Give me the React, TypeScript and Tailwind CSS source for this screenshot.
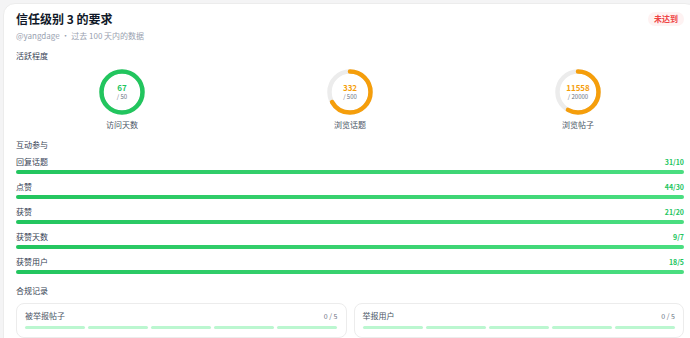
import React from 'react';

// 活跃程度的环形指标
const rings = [
  { label: '访问天数', value: 67, goal: 50, color: '#22c55e' },
  { label: '浏览话题', value: 332, goal: 500, color: '#f59e0b' },
  { label: '浏览帖子', value: 11558, goal: 20000, color: '#f59e0b' },
];

// 互动参与的进度条
const bars = [
  { label: '回复话题', value: 31, goal: 10 },
  { label: '点赞', value: 44, goal: 30 },
  { label: '获赞', value: 21, goal: 20 },
  { label: '获赞天数', value: 9, goal: 7 },
  { label: '获赞用户', value: 18, goal: 5 },
];

const records = [
  { label: '被举报帖子', value: 0, goal: 5 },
  { label: '举报用户', value: 0, goal: 5 },
];

function Ring({ value, goal, color }: { value: number; goal: number; color: string }) {
  const r = 20.5;
  const c = 2 * Math.PI * r;
  const pct = Math.min(value / goal, 1);
  return (
    <div className="relative w-[46px] h-[46px]">
      <svg width="46" height="46" viewBox="0 0 46 46" className="-rotate-90">
        <circle cx="23" cy="23" r={r} fill="none" stroke="#ececec" strokeWidth="4.5" />
        <circle
          cx="23"
          cy="23"
          r={r}
          fill="none"
          stroke={color}
          strokeWidth="4.5"
          strokeLinecap="round"
          strokeDasharray={`${c * pct} ${c}`}
        />
      </svg>
      <div className="absolute inset-0 flex flex-col items-center justify-center leading-none">
        <span className="text-[8px] font-bold" style={{ color }}>
          {value}
        </span>
        <span className="text-[6px] text-gray-500 mt-[2px]">/ {goal}</span>
      </div>
    </div>
  );
}

export default function App() {
  return (
    <div
      className="w-[690px] h-[338px] overflow-hidden bg-[#f4f4f5] pl-[3px] pt-[3px]"
      style={{ fontFamily: '"Noto Sans CJK SC", "Noto Sans", sans-serif' }}
    >
      <div className="w-[694px] h-[360px] bg-white rounded-xl border border-[#ececec] px-[12px] pt-[7px]">
        {/* 标题 */}
        <div className="flex items-center justify-between h-[16px]">
          <h1 className="text-[12px] font-bold text-gray-900 leading-[16px]">信任级别 3 的要求</h1>
          <span className="rounded-full bg-[#fef2f2] text-[#ef4444] text-[8px] font-bold px-[6px] py-[2px] leading-[10px]">
            未达到
          </span>
        </div>
        <p className="text-[8px] text-gray-400 mt-[3px] leading-[12px]">@yangdage · 过去 100 天内的数据</p>

        {/* 活跃程度 */}
        <p className="text-[8px] text-gray-700 mt-[8px] leading-[12px]">活跃程度</p>
        <div className="grid grid-cols-3 gap-4 mt-[7px]">
          {rings.map((r) => (
            <div key={r.label} className="flex flex-col items-center">
              <Ring value={r.value} goal={r.goal} color={r.color} />
              <span className="text-[8px] text-gray-600 mt-[4px] leading-[12px]">{r.label}</span>
            </div>
          ))}
        </div>

        {/* 互动参与 */}
        <p className="text-[8px] text-gray-700 mt-[8px] leading-[12px]">互动参与</p>
        <div className="flex flex-col gap-[7px] mt-[5px]">
          {bars.map((b) => (
            <div key={b.label}>
              <div className="flex justify-between items-center h-[12px]">
                <span className="text-[8px] text-gray-700 leading-[12px]">{b.label}</span>
                <span className="text-[7px] font-bold text-[#22c55e] leading-[12px]">
                  {b.value}/{b.goal}
                </span>
              </div>
              <div className="h-[4px] rounded-full bg-gray-100 mt-[2px]">
                <div className="h-full rounded-full bg-gradient-to-r from-[#22c55e] to-[#4ade80] w-full" />
              </div>
            </div>
          ))}
        </div>

        {/* 合规记录 */}
        <p className="text-[8px] text-gray-700 mt-[11px] leading-[12px]">合规记录</p>
        <div className="grid grid-cols-2 gap-[7px] mt-[6px]">
          {records.map((r) => (
            <div key={r.label} className="border border-[#ececec] rounded-lg px-[8px] pt-[6px] pb-[8px]">
              <div className="flex justify-between items-center h-[12px]">
                <span className="text-[8px] text-gray-600 leading-[12px]">{r.label}</span>
                <span className="text-[7px] text-gray-500 leading-[12px]">
                  {r.value} / {r.goal}
                </span>
              </div>
              <div className="flex gap-[3px] mt-[4px]">
                {Array.from({ length: r.goal }).map((_, i) => (
                  <div key={i} className="flex-1 h-[3px] rounded-full bg-[#bbf7d0]" />
                ))}
              </div>
            </div>
          ))}
        </div>
      </div>
    </div>
  );
}
